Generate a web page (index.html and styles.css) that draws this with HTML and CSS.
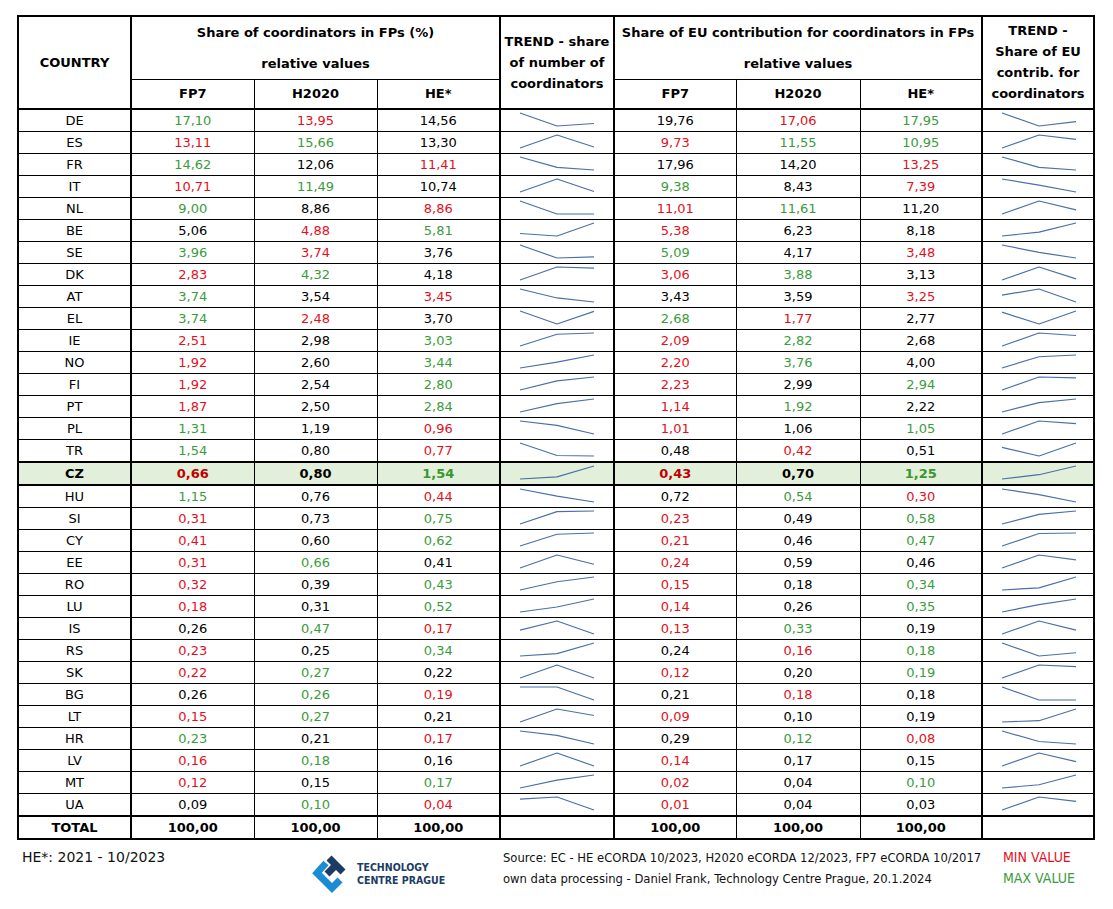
FILE: index.html
```html
<!DOCTYPE html>
<html lang="en">
<head>
<meta charset="utf-8">
<title>Share of coordinators in FPs</title>
<link rel="stylesheet" href="styles.css">
</head>
<body>
<div class="page">
<table class="data">
<colgroup>
<col class="c-country">
<col class="c-num">
<col class="c-num">
<col class="c-num c-end">
<col class="c-trend c-end">
<col class="c-num2">
<col class="c-num3">
<col class="c-num2 c-end">
<col class="c-trend2">
</colgroup>
<thead>
<tr class="h1">
<th rowspan="2" class="head-country">COUNTRY</th>
<th colspan="3" class="grp">Share of coordinators in FPs (%)<br>relative values</th>
<th rowspan="2" class="trend-h">TREND - share<br>of number of<br>coordinators</th>
<th colspan="3" class="grp">Share of EU contribution for coordinators in FPs<br>relative values</th>
<th rowspan="2" class="trend-h">TREND -<br>Share of EU<br>contrib. for<br>coordinators</th>
</tr>
<tr class="h2">
<th>FP7</th><th>H2020</th><th>HE*</th><th>FP7</th><th>H2020</th><th>HE*</th>
</tr>
</thead>
<tbody>
<tr><td>DE</td><td class="g">17,10</td><td class="r">13,95</td><td>14,56</td><td class="spark s1"><svg viewBox="0 -17.10 2 3.15" preserveAspectRatio="none"><polyline points="0,-17.10 1,-13.95 2,-14.56"/></svg></td><td>19,76</td><td class="r">17,06</td><td class="g">17,95</td><td class="spark"><svg viewBox="0 -19.76 2 2.70" preserveAspectRatio="none"><polyline points="0,-19.76 1,-17.06 2,-17.95"/></svg></td></tr>
<tr><td>ES</td><td class="r">13,11</td><td class="g">15,66</td><td>13,30</td><td class="spark s1"><svg viewBox="0 -15.66 2 2.55" preserveAspectRatio="none"><polyline points="0,-13.11 1,-15.66 2,-13.30"/></svg></td><td class="r">9,73</td><td class="g">11,55</td><td class="g">10,95</td><td class="spark"><svg viewBox="0 -11.55 2 1.82" preserveAspectRatio="none"><polyline points="0,-9.73 1,-11.55 2,-10.95"/></svg></td></tr>
<tr><td>FR</td><td class="g">14,62</td><td>12,06</td><td class="r">11,41</td><td class="spark s1"><svg viewBox="0 -14.62 2 3.21" preserveAspectRatio="none"><polyline points="0,-14.62 1,-12.06 2,-11.41"/></svg></td><td>17,96</td><td>14,20</td><td class="r">13,25</td><td class="spark"><svg viewBox="0 -17.96 2 4.71" preserveAspectRatio="none"><polyline points="0,-17.96 1,-14.20 2,-13.25"/></svg></td></tr>
<tr><td>IT</td><td class="r">10,71</td><td class="g">11,49</td><td>10,74</td><td class="spark s1"><svg viewBox="0 -11.49 2 0.78" preserveAspectRatio="none"><polyline points="0,-10.71 1,-11.49 2,-10.74"/></svg></td><td class="g">9,38</td><td>8,43</td><td class="r">7,39</td><td class="spark"><svg viewBox="0 -9.38 2 1.99" preserveAspectRatio="none"><polyline points="0,-9.38 1,-8.43 2,-7.39"/></svg></td></tr>
<tr><td>NL</td><td class="g">9,00</td><td>8,86</td><td class="r">8,86</td><td class="spark s1"><svg viewBox="0 -9.00 2 0.14" preserveAspectRatio="none"><polyline points="0,-9.00 1,-8.86 2,-8.86"/></svg></td><td class="r">11,01</td><td class="g">11,61</td><td>11,20</td><td class="spark"><svg viewBox="0 -11.61 2 0.60" preserveAspectRatio="none"><polyline points="0,-11.01 1,-11.61 2,-11.20"/></svg></td></tr>
<tr><td>BE</td><td>5,06</td><td class="r">4,88</td><td class="g">5,81</td><td class="spark s1"><svg viewBox="0 -5.81 2 0.93" preserveAspectRatio="none"><polyline points="0,-5.06 1,-4.88 2,-5.81"/></svg></td><td class="r">5,38</td><td>6,23</td><td>8,18</td><td class="spark"><svg viewBox="0 -8.18 2 2.80" preserveAspectRatio="none"><polyline points="0,-5.38 1,-6.23 2,-8.18"/></svg></td></tr>
<tr><td>SE</td><td class="g">3,96</td><td class="r">3,74</td><td>3,76</td><td class="spark s1"><svg viewBox="0 -3.96 2 0.22" preserveAspectRatio="none"><polyline points="0,-3.96 1,-3.74 2,-3.76"/></svg></td><td class="g">5,09</td><td>4,17</td><td class="r">3,48</td><td class="spark"><svg viewBox="0 -5.09 2 1.61" preserveAspectRatio="none"><polyline points="0,-5.09 1,-4.17 2,-3.48"/></svg></td></tr>
<tr><td>DK</td><td class="r">2,83</td><td class="g">4,32</td><td>4,18</td><td class="spark s1"><svg viewBox="0 -4.32 2 1.49" preserveAspectRatio="none"><polyline points="0,-2.83 1,-4.32 2,-4.18"/></svg></td><td class="r">3,06</td><td class="g">3,88</td><td>3,13</td><td class="spark"><svg viewBox="0 -3.88 2 0.82" preserveAspectRatio="none"><polyline points="0,-3.06 1,-3.88 2,-3.13"/></svg></td></tr>
<tr><td>AT</td><td class="g">3,74</td><td>3,54</td><td class="r">3,45</td><td class="spark s1"><svg viewBox="0 -3.74 2 0.29" preserveAspectRatio="none"><polyline points="0,-3.74 1,-3.54 2,-3.45"/></svg></td><td>3,43</td><td>3,59</td><td class="r">3,25</td><td class="spark"><svg viewBox="0 -3.59 2 0.34" preserveAspectRatio="none"><polyline points="0,-3.43 1,-3.59 2,-3.25"/></svg></td></tr>
<tr><td>EL</td><td class="g">3,74</td><td class="r">2,48</td><td>3,70</td><td class="spark s1"><svg viewBox="0 -3.74 2 1.26" preserveAspectRatio="none"><polyline points="0,-3.74 1,-2.48 2,-3.70"/></svg></td><td class="g">2,68</td><td class="r">1,77</td><td>2,77</td><td class="spark"><svg viewBox="0 -2.77 2 1.00" preserveAspectRatio="none"><polyline points="0,-2.68 1,-1.77 2,-2.77"/></svg></td></tr>
<tr><td>IE</td><td class="r">2,51</td><td>2,98</td><td class="g">3,03</td><td class="spark s1"><svg viewBox="0 -3.03 2 0.52" preserveAspectRatio="none"><polyline points="0,-2.51 1,-2.98 2,-3.03"/></svg></td><td class="r">2,09</td><td class="g">2,82</td><td>2,68</td><td class="spark"><svg viewBox="0 -2.82 2 0.73" preserveAspectRatio="none"><polyline points="0,-2.09 1,-2.82 2,-2.68"/></svg></td></tr>
<tr><td>NO</td><td class="r">1,92</td><td>2,60</td><td class="g">3,44</td><td class="spark s1"><svg viewBox="0 -3.44 2 1.52" preserveAspectRatio="none"><polyline points="0,-1.92 1,-2.60 2,-3.44"/></svg></td><td class="r">2,20</td><td class="g">3,76</td><td>4,00</td><td class="spark"><svg viewBox="0 -4.00 2 1.80" preserveAspectRatio="none"><polyline points="0,-2.20 1,-3.76 2,-4.00"/></svg></td></tr>
<tr><td>FI</td><td class="r">1,92</td><td>2,54</td><td class="g">2,80</td><td class="spark s1"><svg viewBox="0 -2.80 2 0.88" preserveAspectRatio="none"><polyline points="0,-1.92 1,-2.54 2,-2.80"/></svg></td><td class="r">2,23</td><td>2,99</td><td class="g">2,94</td><td class="spark"><svg viewBox="0 -2.99 2 0.76" preserveAspectRatio="none"><polyline points="0,-2.23 1,-2.99 2,-2.94"/></svg></td></tr>
<tr><td>PT</td><td class="r">1,87</td><td>2,50</td><td class="g">2,84</td><td class="spark s1"><svg viewBox="0 -2.84 2 0.97" preserveAspectRatio="none"><polyline points="0,-1.87 1,-2.50 2,-2.84"/></svg></td><td class="r">1,14</td><td class="g">1,92</td><td>2,22</td><td class="spark"><svg viewBox="0 -2.22 2 1.08" preserveAspectRatio="none"><polyline points="0,-1.14 1,-1.92 2,-2.22"/></svg></td></tr>
<tr><td>PL</td><td class="g">1,31</td><td>1,19</td><td class="r">0,96</td><td class="spark s1"><svg viewBox="0 -1.31 2 0.35" preserveAspectRatio="none"><polyline points="0,-1.31 1,-1.19 2,-0.96"/></svg></td><td class="r">1,01</td><td>1,06</td><td class="g">1,05</td><td class="spark"><svg viewBox="0 -1.06 2 0.05" preserveAspectRatio="none"><polyline points="0,-1.01 1,-1.06 2,-1.05"/></svg></td></tr>
<tr><td>TR</td><td class="g">1,54</td><td>0,80</td><td class="r">0,77</td><td class="spark s1"><svg viewBox="0 -1.54 2 0.77" preserveAspectRatio="none"><polyline points="0,-1.54 1,-0.80 2,-0.77"/></svg></td><td>0,48</td><td class="r">0,42</td><td>0,51</td><td class="spark"><svg viewBox="0 -0.51 2 0.09" preserveAspectRatio="none"><polyline points="0,-0.48 1,-0.42 2,-0.51"/></svg></td></tr>
<tr class="cz"><td>CZ</td><td class="rb">0,66</td><td>0,80</td><td class="gb">1,54</td><td class="spark s1"><svg viewBox="0 -1.54 2 0.88" preserveAspectRatio="none"><polyline points="0,-0.66 1,-0.80 2,-1.54"/></svg></td><td class="rb">0,43</td><td>0,70</td><td class="gb">1,25</td><td class="spark"><svg viewBox="0 -1.25 2 0.82" preserveAspectRatio="none"><polyline points="0,-0.43 1,-0.70 2,-1.25"/></svg></td></tr>
<tr><td>HU</td><td class="g">1,15</td><td>0,76</td><td class="r">0,44</td><td class="spark s1"><svg viewBox="0 -1.15 2 0.71" preserveAspectRatio="none"><polyline points="0,-1.15 1,-0.76 2,-0.44"/></svg></td><td>0,72</td><td class="g">0,54</td><td class="r">0,30</td><td class="spark"><svg viewBox="0 -0.72 2 0.42" preserveAspectRatio="none"><polyline points="0,-0.72 1,-0.54 2,-0.30"/></svg></td></tr>
<tr><td>SI</td><td class="r">0,31</td><td>0,73</td><td class="g">0,75</td><td class="spark s1"><svg viewBox="0 -0.75 2 0.44" preserveAspectRatio="none"><polyline points="0,-0.31 1,-0.73 2,-0.75"/></svg></td><td class="r">0,23</td><td>0,49</td><td class="g">0,58</td><td class="spark"><svg viewBox="0 -0.58 2 0.35" preserveAspectRatio="none"><polyline points="0,-0.23 1,-0.49 2,-0.58"/></svg></td></tr>
<tr><td>CY</td><td class="r">0,41</td><td>0,60</td><td class="g">0,62</td><td class="spark s1"><svg viewBox="0 -0.62 2 0.21" preserveAspectRatio="none"><polyline points="0,-0.41 1,-0.60 2,-0.62"/></svg></td><td class="r">0,21</td><td>0,46</td><td class="g">0,47</td><td class="spark"><svg viewBox="0 -0.47 2 0.26" preserveAspectRatio="none"><polyline points="0,-0.21 1,-0.46 2,-0.47"/></svg></td></tr>
<tr><td>EE</td><td class="r">0,31</td><td class="g">0,66</td><td>0,41</td><td class="spark s1"><svg viewBox="0 -0.66 2 0.35" preserveAspectRatio="none"><polyline points="0,-0.31 1,-0.66 2,-0.41"/></svg></td><td class="r">0,24</td><td>0,59</td><td>0,46</td><td class="spark"><svg viewBox="0 -0.59 2 0.35" preserveAspectRatio="none"><polyline points="0,-0.24 1,-0.59 2,-0.46"/></svg></td></tr>
<tr><td>RO</td><td class="r">0,32</td><td>0,39</td><td class="g">0,43</td><td class="spark s1"><svg viewBox="0 -0.43 2 0.11" preserveAspectRatio="none"><polyline points="0,-0.32 1,-0.39 2,-0.43"/></svg></td><td class="r">0,15</td><td>0,18</td><td class="g">0,34</td><td class="spark"><svg viewBox="0 -0.34 2 0.19" preserveAspectRatio="none"><polyline points="0,-0.15 1,-0.18 2,-0.34"/></svg></td></tr>
<tr><td>LU</td><td class="r">0,18</td><td>0,31</td><td class="g">0,52</td><td class="spark s1"><svg viewBox="0 -0.52 2 0.34" preserveAspectRatio="none"><polyline points="0,-0.18 1,-0.31 2,-0.52"/></svg></td><td class="r">0,14</td><td>0,26</td><td class="g">0,35</td><td class="spark"><svg viewBox="0 -0.35 2 0.21" preserveAspectRatio="none"><polyline points="0,-0.14 1,-0.26 2,-0.35"/></svg></td></tr>
<tr><td>IS</td><td>0,26</td><td class="g">0,47</td><td class="r">0,17</td><td class="spark s1"><svg viewBox="0 -0.47 2 0.30" preserveAspectRatio="none"><polyline points="0,-0.26 1,-0.47 2,-0.17"/></svg></td><td class="r">0,13</td><td class="g">0,33</td><td>0,19</td><td class="spark"><svg viewBox="0 -0.33 2 0.20" preserveAspectRatio="none"><polyline points="0,-0.13 1,-0.33 2,-0.19"/></svg></td></tr>
<tr><td>RS</td><td class="r">0,23</td><td>0,25</td><td class="g">0,34</td><td class="spark s1"><svg viewBox="0 -0.34 2 0.11" preserveAspectRatio="none"><polyline points="0,-0.23 1,-0.25 2,-0.34"/></svg></td><td>0,24</td><td class="r">0,16</td><td class="g">0,18</td><td class="spark"><svg viewBox="0 -0.24 2 0.08" preserveAspectRatio="none"><polyline points="0,-0.24 1,-0.16 2,-0.18"/></svg></td></tr>
<tr><td>SK</td><td class="r">0,22</td><td class="g">0,27</td><td>0,22</td><td class="spark s1"><svg viewBox="0 -0.27 2 0.05" preserveAspectRatio="none"><polyline points="0,-0.22 1,-0.27 2,-0.22"/></svg></td><td class="r">0,12</td><td>0,20</td><td class="g">0,19</td><td class="spark"><svg viewBox="0 -0.20 2 0.08" preserveAspectRatio="none"><polyline points="0,-0.12 1,-0.20 2,-0.19"/></svg></td></tr>
<tr><td>BG</td><td>0,26</td><td class="g">0,26</td><td class="r">0,19</td><td class="spark s1"><svg viewBox="0 -0.26 2 0.07" preserveAspectRatio="none"><polyline points="0,-0.26 1,-0.26 2,-0.19"/></svg></td><td>0,21</td><td class="r">0,18</td><td>0,18</td><td class="spark"><svg viewBox="0 -0.21 2 0.03" preserveAspectRatio="none"><polyline points="0,-0.21 1,-0.18 2,-0.18"/></svg></td></tr>
<tr><td>LT</td><td class="r">0,15</td><td class="g">0,27</td><td>0,21</td><td class="spark s1"><svg viewBox="0 -0.27 2 0.12" preserveAspectRatio="none"><polyline points="0,-0.15 1,-0.27 2,-0.21"/></svg></td><td class="r">0,09</td><td>0,10</td><td>0,19</td><td class="spark"><svg viewBox="0 -0.19 2 0.10" preserveAspectRatio="none"><polyline points="0,-0.09 1,-0.10 2,-0.19"/></svg></td></tr>
<tr><td>HR</td><td class="g">0,23</td><td>0,21</td><td class="r">0,17</td><td class="spark s1"><svg viewBox="0 -0.23 2 0.06" preserveAspectRatio="none"><polyline points="0,-0.23 1,-0.21 2,-0.17"/></svg></td><td>0,29</td><td class="g">0,12</td><td class="r">0,08</td><td class="spark"><svg viewBox="0 -0.29 2 0.21" preserveAspectRatio="none"><polyline points="0,-0.29 1,-0.12 2,-0.08"/></svg></td></tr>
<tr><td>LV</td><td class="r">0,16</td><td class="g">0,18</td><td>0,16</td><td class="spark s1"><svg viewBox="0 -0.18 2 0.02" preserveAspectRatio="none"><polyline points="0,-0.16 1,-0.18 2,-0.16"/></svg></td><td class="r">0,14</td><td>0,17</td><td>0,15</td><td class="spark"><svg viewBox="0 -0.17 2 0.03" preserveAspectRatio="none"><polyline points="0,-0.14 1,-0.17 2,-0.15"/></svg></td></tr>
<tr><td>MT</td><td class="r">0,12</td><td>0,15</td><td class="g">0,17</td><td class="spark s1"><svg viewBox="0 -0.17 2 0.05" preserveAspectRatio="none"><polyline points="0,-0.12 1,-0.15 2,-0.17"/></svg></td><td class="r">0,02</td><td>0,04</td><td class="g">0,10</td><td class="spark"><svg viewBox="0 -0.10 2 0.08" preserveAspectRatio="none"><polyline points="0,-0.02 1,-0.04 2,-0.10"/></svg></td></tr>
<tr><td>UA</td><td>0,09</td><td class="g">0,10</td><td class="r">0,04</td><td class="spark s1"><svg viewBox="0 -0.10 2 0.06" preserveAspectRatio="none"><polyline points="0,-0.09 1,-0.10 2,-0.04"/></svg></td><td class="r">0,01</td><td>0,04</td><td>0,03</td><td class="spark"><svg viewBox="0 -0.04 2 0.03" preserveAspectRatio="none"><polyline points="0,-0.01 1,-0.04 2,-0.03"/></svg></td></tr>
<tr class="total"><td>TOTAL</td><td>100,00</td><td>100,00</td><td>100,00</td><td class="s1"></td><td>100,00</td><td>100,00</td><td>100,00</td><td></td></tr>
</tbody>
</table>

<div class="footer">
<div class="note">HE*: 2021 - 10/2023</div>
<div class="logo">
<svg class="logo-mark" viewBox="0 0 36 42" width="36" height="42" aria-hidden="true">
<polyline points="14,11 5,21 20,36 28,28" fill="none" stroke="#1b8bd3" stroke-width="7" stroke-linejoin="miter"/>
<polyline points="17,6 31,20" fill="none" stroke="#1c3c66" stroke-width="7"/>
<polyline points="24,13 15,22" fill="none" stroke="#1c3c66" stroke-width="7"/>
</svg>
<div class="logo-text"><span>TECHNOLOGY</span><span>CENTRE PRAGUE</span></div>
</div>
<div class="source">
<p>Source: EC - HE eCORDA 10/2023, H2020 eCORDA 12/2023, FP7 eCORDA 10/2017</p>
<p>own data processing - Daniel Frank, Technology Centre Prague, 20.1.2024</p>
</div>
<div class="legend">
<p class="min">MIN VALUE</p>
<p class="max">MAX VALUE</p>
</div>
</div>
</div>
</body>
</html>
```

FILE: styles.css
```css
html, body {
  margin: 0;
  padding: 0;
  background: #ffffff;
}

body {
  font-family: "DejaVu Sans", Verdana, sans-serif;
  color: #000;
}

.page {
  padding: 15px 0 0 17px;
}

.data {
  border-collapse: collapse;
  table-layout: fixed;
  width: 1078px;
  border: 2px solid #000;
  font-size: 13px;
}

.data th,
.data td {
  border: 1px solid #000;
  padding: 0;
  text-align: center;
  vertical-align: middle;
  white-space: nowrap;
}

.c-country { width: 113px; border-right: 2px solid #000; }
.c-num { width: 123px; }
.c-num2 { width: 122px; }
.c-num3 { width: 124px; }
.c-trend { width: 114px; }
.c-trend2 { width: 112px; }
.c-end { border-right: 2px solid #000; }

.data th {
  font-weight: bold;
}

.h1 { height: 62px; }
.h2 { height: 29px; }

.grp {
  line-height: 31px;
  border-bottom: 2px solid #000;
}

.trend-h {
  line-height: 21px;
}

.h2 th {
  border-bottom: 2px solid #000;
}

.data thead th.head-country,
.data thead th.trend-h {
  border-bottom: 2px solid #000;
}

.data tbody td {
  line-height: 21px;
}

.r { color: #e3101b; }
.g { color: #3a9c3a; }

.cz td {
  background: #e2efda;
  font-weight: bold;
  border-top: 2px solid #000;
  border-bottom: 2px solid #000;
}

.cz .rb { color: #c00000; }
.cz .gb { color: #3a962f; }

.total td {
  font-weight: bold;
  border-top: 2px solid #000;
}

.s1 {
  border-top: 2px solid #000;
  border-bottom: 2px solid #000;
}

.spark svg {
  display: block;
  width: 74px;
  height: 13px;
  margin: 0 0 1px 19px;
  overflow: visible;
}

.spark polyline {
  fill: none;
  stroke: #4a70a6;
  stroke-width: 1.2;
  vector-effect: non-scaling-stroke;
  stroke-linejoin: round;
}

/* footer */
.footer {
  display: grid;
  grid-template-columns: 290px 191px 500px auto;
  padding: 7px 0 0 5px;
  align-items: start;
}

.footer p {
  margin: 0;
}

.note {
  font-size: 14px;
  line-height: 21px;
  color: #111;
}

.logo {
  display: flex;
  align-items: center;
  gap: 9px;
  margin-top: 5px;
}

.logo-mark {
  display: block;
  flex: none;
}

.logo-text {
  display: flex;
  flex-direction: column;
  font-family: "DejaVu Sans Condensed", "DejaVu Sans", sans-serif;
  font-stretch: condensed;
  font-weight: bold;
  font-size: 10.5px;
  line-height: 13px;
  color: #1c3c66;
  margin-top: 2px;
}

.source,
.legend {
  font-family: "DejaVu Sans Condensed", "DejaVu Sans", sans-serif;
  font-stretch: condensed;
  line-height: 21px;
  color: #111;
}

.source {
  font-size: 12.9px;
}

.legend {
  font-size: 14px;
}

.legend .min { color: #e3101b; }
.legend .max { color: #3a9c3a; }
```
